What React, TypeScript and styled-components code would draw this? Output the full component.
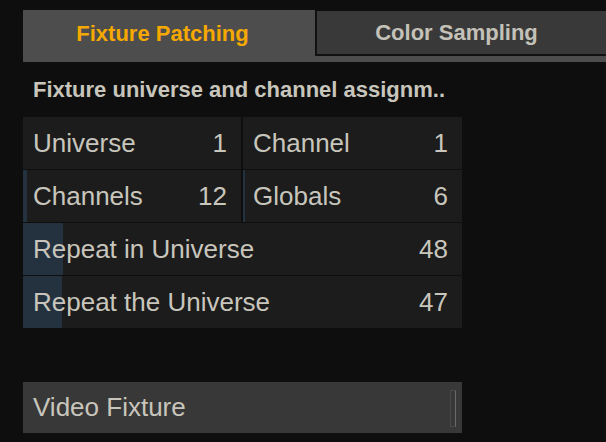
import React from "react";
import styled, { createGlobalStyle } from "styled-components";

const Global = createGlobalStyle`
  html, body { margin: 0; padding: 0; background: #0e0e0e; }
  body { font-family: "Liberation Sans", Arial, sans-serif; }
`;

const Page = styled.div`
  width: 606px;
  height: 442px;
  background: #0e0e0e;
  padding-top: 10px;
  box-sizing: border-box;
  overflow: hidden;
`;

const TabBar = styled.div`
  margin-left: 23px;
  display: flex;
  flex-direction: column;
`;

const TabRow = styled.div`
  display: flex;
  align-items: flex-start;
  height: 46px;
`;

const Tab = styled.div<{ $active?: boolean }>`
  box-sizing: border-box;
  flex: ${(p) => (p.$active ? "0 0 292px" : "1 1 auto")};
  height: ${(p) => (p.$active ? "46px" : "45px")};
  margin-top: ${(p) => (p.$active ? "0" : "1px")};
  background: ${(p) => (p.$active ? "#4d4d4d" : "#393939")};
  border-left: ${(p) => (p.$active ? "none" : "2px solid #111")};
  border-bottom: ${(p) => (p.$active ? "none" : "2px solid #111")};
  color: ${(p) => (p.$active ? "#f5a900" : "#c4c2b8")};
  font-weight: bold;
  font-size: 22px;
  display: flex;
  align-items: center;
  justify-content: center;
  padding-right: ${(p) => (p.$active ? "13px" : "10px")};
  padding-top: ${(p) => (p.$active ? "1px" : "0")};
`;

const TabStrip = styled.div`
  height: 6px;
  background: #4d4d4d;
`;

const Content = styled.div`
  width: 439px;
  margin-left: 23px;
  display: flex;
  flex-direction: column;
`;

const Heading = styled.div`
  height: 55px;
  display: flex;
  align-items: center;
  padding-left: 10px;
  color: #c8c6bc;
  font-weight: bold;
  font-size: 22px;
  box-sizing: border-box;
  white-space: nowrap;
`;

const Grid = styled.div`
  display: grid;
  grid-template-columns: 218px 219px;
  column-gap: 2px;
  row-gap: 1px;
`;

const Cell = styled.div<{ $wide?: boolean }>`
  position: relative;
  grid-column: ${(p) => (p.$wide ? "1 / span 2" : "auto")};
  height: 52px;
  background: #1c1c1c;
  display: flex;
  align-items: center;
  justify-content: space-between;
  padding: 0 14px 0 10px;
  box-sizing: border-box;
  color: #c8c6bc;
  font-size: 26px;
  overflow: hidden;
`;

const Fill = styled.div`
  position: absolute;
  left: 0;
  top: 0;
  bottom: 0;
  background: #243240;
`;

const Label = styled.span`
  position: relative;
`;

const Value = styled.span`
  position: relative;
`;

const Spacer = styled.div`
  height: 54px;
`;

const Toggle = styled.div`
  height: 51px;
  background: #383838;
  display: flex;
  align-items: center;
  justify-content: space-between;
  padding: 0 6px 0 10px;
  box-sizing: border-box;
  color: #c8c6bc;
  font-size: 26px;
`;

const Knob = styled.div`
  width: 6px;
  height: 37px;
  box-sizing: border-box;
  border: 1px solid #4a4a4a;
  border-right-color: #6a6a6a;
  margin-top: 1px;
`;

type Item = { label: string; value: number; fill: number; wide?: boolean };

const items: Item[] = [
  { label: "Universe", value: 1, fill: 0 },
  { label: "Channel", value: 1, fill: 0 },
  { label: "Channels", value: 12, fill: 4 },
  { label: "Globals", value: 6, fill: 2 },
  { label: "Repeat in Universe", value: 48, fill: 40, wide: true },
  { label: "Repeat the Universe", value: 47, fill: 39, wide: true },
];

export default function App() {
  return (
    <>
      <Global />
      <Page>
        <TabBar>
          <TabRow>
            <Tab $active>Fixture Patching</Tab>
            <Tab>Color Sampling</Tab>
          </TabRow>
          <TabStrip />
        </TabBar>
        <Content>
          <Heading>Fixture universe and channel assignm..</Heading>
          <Grid>
            {items.map((it) => (
              <Cell key={it.label} $wide={it.wide}>
                {it.fill > 0 && <Fill style={{ width: it.fill }} />}
                <Label>{it.label}</Label>
                <Value>{it.value}</Value>
              </Cell>
            ))}
          </Grid>
          <Spacer />
          <Toggle>
            <span>Video Fixture</span>
            <Knob />
          </Toggle>
        </Content>
      </Page>
    </>
  );
}
